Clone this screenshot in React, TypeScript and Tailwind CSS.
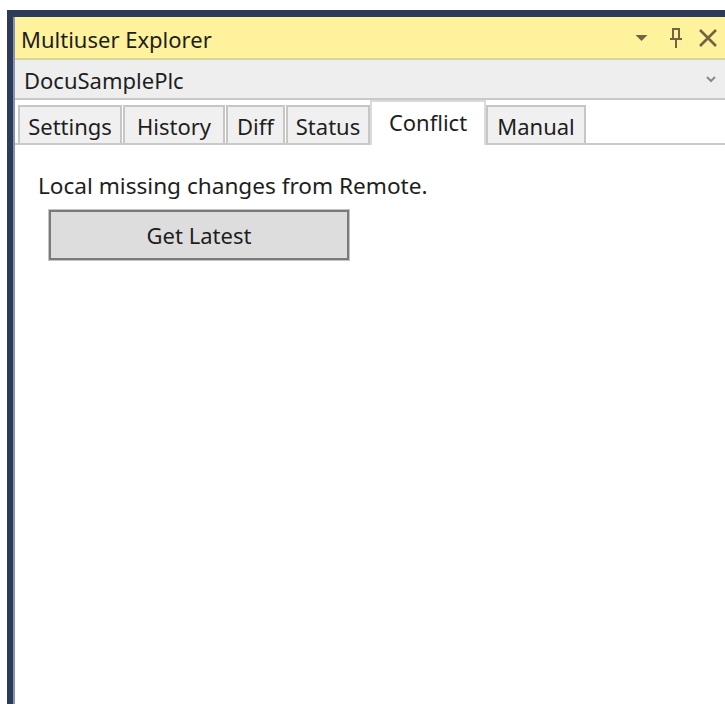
import React from "react";

const tabs = [
  { name: "Settings", w: "w-[104px]" },
  { name: "History", w: "w-[102px]" },
  { name: "Diff", w: "w-[59px]" },
  { name: "Status", w: "w-[84px]" },
  { name: "Conflict", w: "w-[116px]" },
  { name: "Manual", w: "w-[100px]" },
];

export default function App() {
  const active = "Conflict";

  return (
    <div
      className="w-[725px] h-[704px] bg-white pl-[7px] pt-[10px] overflow-hidden"
      style={{ fontFamily: '"Noto Sans", "Open Sans", sans-serif' }}
    >
      <div className="h-full border-l-[6px] border-t-[7px] border-[#2d3b5b] flex flex-col">
        <div className="flex-1 flex flex-col border-l-2 border-[#8794ae] bg-white">
          {/* title bar */}
          <div className="h-[43px] bg-[#fff29d] border-b-2 border-[#d9d3a0] flex items-center pl-[6px] pr-[7px]">
            <span className="text-[22px] text-[#1e1e1e] flex-1 leading-none pt-[3px]">Multiuser Explorer</span>
            <div className="flex items-center text-[#716442]">
              <svg width="13" height="8" viewBox="0 0 13 8">
                <path d="M0.5 1h12L6.5 7z" fill="currentColor" />
              </svg>
              <svg width="14" height="22" viewBox="0 0 14 22" className="ml-[21px]">
                <path d="M3 2h8M4 2v10M10 2v10M1 12h12M7 12v9" stroke="currentColor" strokeWidth="2" fill="none" />
              </svg>
              <svg width="20" height="20" viewBox="0 0 20 20" className="ml-[15px]">
                <path d="M2 2l16 16M18 2L2 18" stroke="currentColor" strokeWidth="2.6" fill="none" />
              </svg>
            </div>
          </div>

          {/* project selector */}
          <div className="h-[40px] bg-[#eeeeef] border-b-2 border-[#c8c8c8] flex items-center pl-[9px] pr-[8px]">
            <span className="text-[22px] text-[#1e1e1e] flex-1 leading-none pt-[2px]">DocuSamplePlc</span>
            <svg width="12" height="8" viewBox="0 0 12 8" className="text-[#8a8a8a]">
              <path d="M2 2l4 4 4-4" stroke="currentColor" strokeWidth="2" fill="none" />
            </svg>
          </div>

          {/* tab strip */}
          <div className="h-[45px] flex items-end gap-[1px] pl-[3px] border-b-2 border-[#c9c9c9]">
            {tabs.map((t) =>
              t.name === active ? (
                <div
                  key={t.name}
                  className={`${t.w} h-[45px] -mb-[2px] -mx-[1px] bg-white border-x-2 border-t-2 border-[#dadada] flex justify-center items-center text-[22px] text-[#1e1e1e] leading-none pb-[4px] relative z-10`}
                >
                  {t.name}
                </div>
              ) : (
                <div
                  key={t.name}
                  className={`${t.w} h-[38px] bg-[#f0f0f0] border-2 border-b-0 border-[#c6c6c6] flex justify-center items-center text-[22px] text-[#1e1e1e] leading-none pt-[2px]`}
                >
                  {t.name}
                </div>
              )
            )}
          </div>

          {/* conflict page */}
          <div className="pl-[23px] pt-[30px]">
            <div className="text-[22.6px] text-[#1e1e1e] leading-none">Local missing changes from Remote.</div>
            <button className="mt-[12px] ml-[11px] w-[300px] h-[50px] bg-[#dddddd] border-2 border-[#7a7a7a] outline outline-1 outline-[#c4c4c4] text-[22px] text-[#1e1e1e] leading-none flex items-center justify-center">
              Get Latest
            </button>
          </div>
        </div>
      </div>
    </div>
  );
}
